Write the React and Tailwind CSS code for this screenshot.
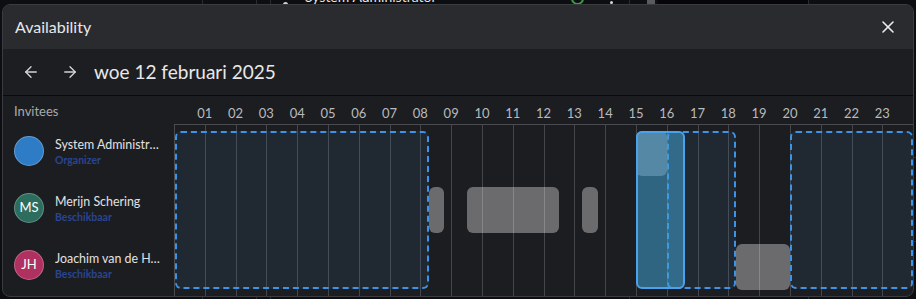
import React from "react";
import { ArrowLeft, ArrowRight, X } from "lucide-react";

const pct = (h) => `${(h / 24) * 100}%`;

const invitees = [
  { name: "System Administrator", sub: "Organizer", initials: "", color: "bg-[#2f7cc6]" },
  { name: "Merijn Schering", sub: "Beschikbaar", initials: "MS", color: "bg-[#2d6d5e]" },
  { name: "Joachim van de Haterd", sub: "Beschikbaar", initials: "JH", color: "bg-[#ae3160]" },
];

const available = [
  [0, 8.25],
  [16, 18.25],
  [20, 24],
];

const busy = [
  { from: 8.25, to: 8.75, top: 62, h: 46 },
  { from: 9.5, to: 12.5, top: 62, h: 46 },
  { from: 13.25, to: 13.75, top: 62, h: 46 },
  { from: 18.25, to: 20, top: 119, h: 46 },
];

export default function App() {
  const labels = Array.from({ length: 23 }, (_, i) => String(i + 1).padStart(2, "0"));
  return (
    <div className="relative w-[916px] h-[299px] overflow-hidden bg-[#0d0e11] font-['Lato',sans-serif]">
      {/* background page behind the dialog */}
      <div className="absolute left-[256px] top-0 h-full w-px bg-[#2a2b30]" />
      <div className="absolute left-[270px] top-0 h-full w-px bg-[#2a2b30]" />
      <div className="absolute left-[202px] top-0 h-full w-px bg-[#2a2b30]" />
      <div className="absolute left-[629px] top-0 h-full w-px bg-[#2a2b30]" />
      <div className="absolute left-[647px] top-0 h-[6px] w-[8px] bg-[#5a5b5f]" />
      <div className="absolute left-[658px] top-0 h-[6px] w-[150px] bg-[#060608]" />
      <div className="absolute left-[808px] top-0 h-full w-px bg-[#2a2b30]" />
      <div className="absolute left-[571px] top-[-8px] h-[13px] w-[13px] rounded-full border-2 border-[#3f9a46]" />
      <div className="absolute left-[610px] top-[1px] h-[3px] w-[3px] rounded-full bg-[#d8d8d8]" />
      <div className="absolute left-[283px] top-[2px] h-[3px] w-[5px] rounded-t-full bg-[#cfcfcf]" />
      <div className="absolute left-[305px] top-[-11px] text-[14px] leading-[16px] text-[#e6e6e6]">System Administrator</div>
      <div className="absolute right-0 top-[157px] h-px w-[4px] bg-[#2a2b30]" />
      <div className="absolute right-0 top-[241px] h-px w-[4px] bg-[#2a2b30]" />

      {/* dialog */}
      <div className="relative mx-[2px] mt-[4px] flex h-[293px] flex-col overflow-hidden rounded-lg border border-[#3b3c41] bg-[#1c1d20]">
        <div className="flex h-[44px] shrink-0 items-center justify-between bg-[#2a2b2f] pl-[12px] pr-[15px]">
          <span className="text-[16px] leading-[20px] text-[#e8e8ea]">Availability</span>
          <X size={20} strokeWidth={1.9} className="text-[#eeeeee]" />
        </div>

        <div className="flex h-[47px] shrink-0 items-center border-b border-[#0a0a0c] bg-[#1d1e21] pl-[19px]">
          <ArrowLeft size={18} strokeWidth={1.8} className="text-[#d4d4d6]" />
          <ArrowRight size={18} strokeWidth={1.8} className="ml-[21px] text-[#d4d4d6]" />
          <span className="ml-[15px] text-[19px] leading-[24px] text-[#e8e8ea]">woe 12 februari 2025</span>
        </div>

        <div className="flex min-h-0 flex-1">
          {/* invitees column */}
          <div className="flex w-[171px] shrink-0 flex-col">
            <div className="h-[29px] pl-[11px] pt-[7px] text-[13px] leading-[16px] text-[#a8a9ad]">Invitees</div>
            {invitees.map((p) => (
              <div key={p.name} className="flex h-[57px] items-start pl-[11px] pt-[11px]">
                <div
                  className={`flex h-[30px] w-[30px] shrink-0 items-center justify-center rounded-full border border-white/25 ${p.color} text-[13px] text-white`}
                >
                  {p.initials}
                </div>
                <div className="ml-[11px] mt-[1px] flex w-[105px] flex-col">
                  <span className="truncate text-[12.4px] leading-[16px] text-[#e2e2e4]">{p.name}</span>
                  <span className="text-[10.5px] font-bold leading-[14px] text-[#2a4590]">{p.sub}</span>
                </div>
              </div>
            ))}
          </div>

          {/* timeline */}
          <div className="flex min-w-0 flex-1 flex-col">
            <div className="flex h-[28px] shrink-0 items-end px-[2.0833%] pb-[3px]">
              {labels.map((l) => (
                <div key={l} className="flex-1 text-center text-[13px] leading-[16px] text-[#b9babd]">
                  {l}
                </div>
              ))}
            </div>
            <div className="relative flex-1 border-l border-t border-[#4a4b50]">
              <div className="absolute inset-0 flex">
                {Array.from({ length: 24 }, (_, i) => (
                  <div key={i} className={`flex-1 ${i < 23 ? "border-r border-[#45464b]" : ""}`} />
                ))}
              </div>

              {available.map(([a, b]) => (
                <div
                  key={a}
                  className="absolute top-[6px] bottom-[7px] rounded-md border-2 border-dashed border-[#3d93e6] bg-[rgba(70,140,210,0.1)]"
                  style={{ left: pct(a), width: pct(b - a) }}
                />
              ))}

              {busy.map((b, i) => (
                <div
                  key={i}
                  className="absolute rounded-md bg-[rgba(255,255,255,0.35)]"
                  style={{ left: pct(b.from), width: pct(b.to - b.from), top: b.top, height: b.h }}
                />
              ))}

              <div
                className="absolute top-[6px] h-[45px] rounded-md bg-[rgba(255,255,255,0.35)]"
                style={{ left: pct(15), width: pct(1) }}
              />

              <div
                className="absolute top-[6px] bottom-[7px] rounded-md border-2 border-[#4aa2ee] bg-[rgba(66,160,211,0.55)]"
                style={{ left: pct(15), width: pct(1.6) }}
              />
            </div>
          </div>
        </div>
      </div>
    </div>
  );
}
